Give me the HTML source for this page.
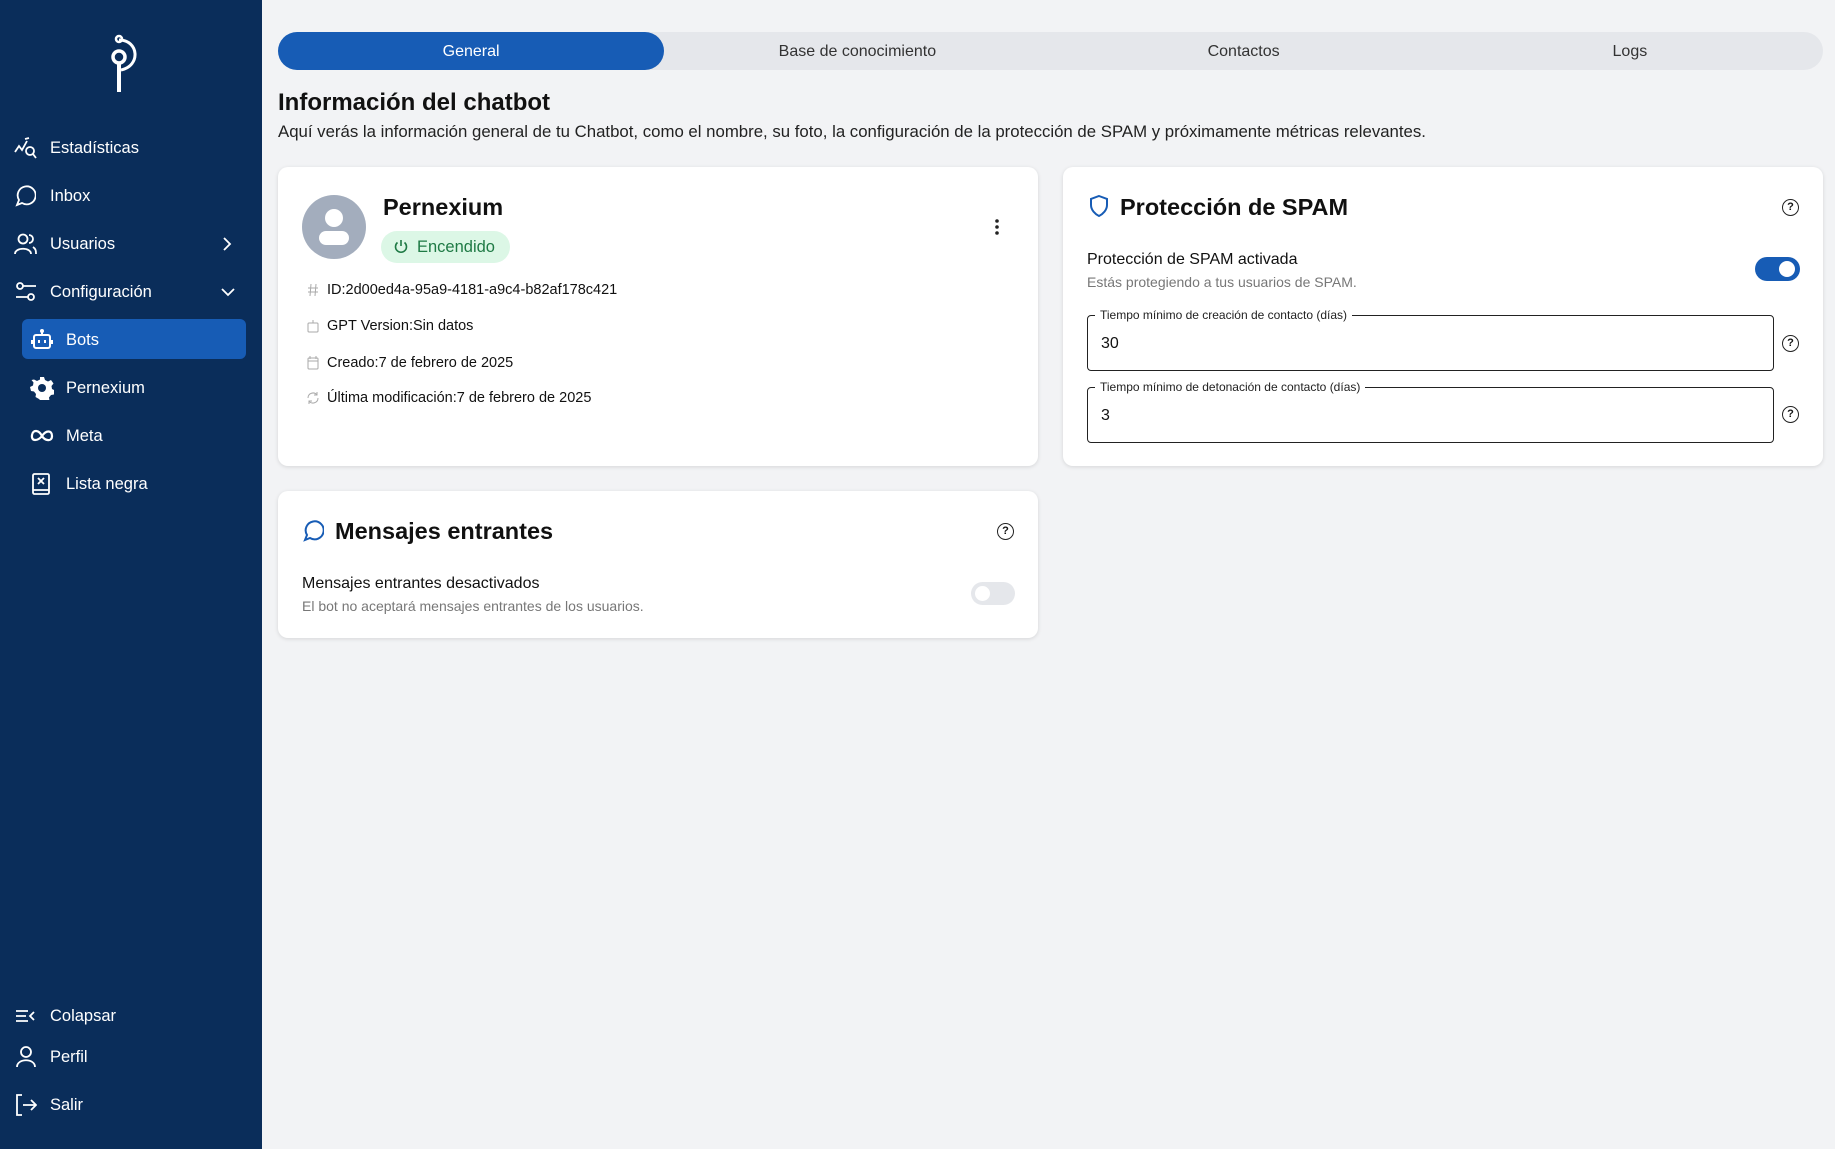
<!DOCTYPE html>
<html><head><meta charset="utf-8"><style>
*{box-sizing:border-box;margin:0;padding:0}
body{width:1835px;height:1149px;background:#f2f3f5;font-family:"Liberation Sans",sans-serif;position:relative;overflow:hidden;color:#111}
.a{position:absolute}
#sb{left:0;top:0;width:262px;height:1149px;background:#0a2d5a}
.it{position:absolute;left:0;width:262px;color:#fff;font-size:16.5px;display:flex;align-items:center;height:30px;margin-top:-14px}
.it svg{position:absolute}
.it span{position:absolute;left:50px}
.sub span{left:66px}
.tabs{left:278px;top:32px;width:1545px;height:38px;background:#e5e7eb;border-radius:19px;display:flex}
.tabs div{flex:1;text-align:center;line-height:40px;font-size:16px;color:#333}
.tabs .on{background:#175cb5;color:#fff;border-radius:19px}
.card{background:#fff;border-radius:10px;box-shadow:0 1px 4px rgba(0,0,0,.12)}
.row{position:absolute;left:307px;font-size:14.5px;display:flex;align-items:center;height:20px;margin-top:-9px}
.row svg{margin-right:8px}
.row b{font-weight:normal}
.h{font-weight:bold;font-size:23.5px}
.q{width:17px;height:17px;border:1.6px solid #222;border-radius:50%;font-size:11px;font-weight:bold;text-align:center;line-height:14px;margin-top:-8px;margin-left:-8px}
.fs{border:1.5px solid #222;border-radius:4px;background:#fff}
.lg{font-size:12px;background:#fff;padding:0 5px;color:#222}
</style></head><body>
<div id="sb" class="a">
 <svg class="a" style="left:105px;top:32px" width="40" height="62" viewBox="0 0 40 62"><circle cx="14" cy="7" r="3" fill="none" stroke="#fff" stroke-width="2.5"/><path d="M14 8 C34 8 36 34 16 38" fill="none" stroke="#fff" stroke-width="3"/><circle cx="14" cy="25" r="6" fill="none" stroke="#fff" stroke-width="3.5"/><path d="M14 31 V60" stroke="#fff" stroke-width="4"/></svg>
 <div class="it" style="top:147px"><svg style="left:14px" width="24" height="22" viewBox="0 0 24 22" fill="none" stroke="#fff" stroke-width="1.8"><path d="M1 15 L5 9 L8 13 L13 4 M11 2 L15 1"/><circle cx="16" cy="14" r="4"/><path d="M19 17 L22 21"/></svg><span>Estadísticas</span></div>
 <div class="it" style="top:195px"><svg style="left:14px" width="22" height="22" viewBox="0 0 22 22" fill="none" stroke="#fff" stroke-width="1.8"><path d="M3 20 L5 15 A9 9 0 1 1 8 18 Z"/></svg><span>Inbox</span></div>
 <div class="it" style="top:243px"><svg style="left:14px" width="24" height="22" viewBox="0 0 24 22" fill="none" stroke="#fff" stroke-width="1.8"><circle cx="9" cy="6" r="4.5"/><path d="M1 21 C1 14 17 14 17 21 M15 2 A4 4 0 0 1 15 10 M19 14 C22 16 22 18 22 21"/></svg><span>Usuarios</span><svg style="left:222px" width="10" height="14" viewBox="0 0 10 14" fill="none" stroke="#fff" stroke-width="1.8"><path d="M2 1 L8 7 L2 13"/></svg></div>
 <div class="it" style="top:291px"><svg style="left:15px" width="22" height="20" viewBox="0 0 22 20" fill="none" stroke="#fff" stroke-width="1.8"><circle cx="5" cy="4" r="3"/><path d="M8 4 H21 M1 15 H13"/><circle cx="16" cy="15" r="3"/></svg><span>Configuración</span><svg style="left:221px" width="14" height="10" viewBox="0 0 14 10" fill="none" stroke="#fff" stroke-width="1.8"><path d="M1 2 L7 8 L13 2"/></svg></div>
 <div class="a" style="left:22px;top:319px;width:224px;height:40px;background:#175cb5;border-radius:6px"></div>
 <div class="it sub" style="top:339px"><svg style="left:31px" width="22" height="22" viewBox="0 0 22 22" fill="none" stroke="#fff" stroke-width="2"><path d="M11 2 V6"/><circle cx="11" cy="2" r="1"/><rect x="3" y="6" width="16" height="13" rx="2"/><path d="M8 11 V14 M14 11 V14 M1 11 V15 M21 11 V15"/></svg><span>Bots</span></div>
 <div class="it sub" style="top:387px"><svg style="left:30px" width="24" height="24" viewBox="0 0 24 24"><path fill="#fff" d="M10 1h4l1 3 3 1.5 3-1.5 2.5 3.5-2 2.5.5 3 3 1.5-1 4-3 .5-2 2.5.5 3-3.5 2-2.5-2h-3L9 23l-3.5-2 .5-3-2-2.5-3-.5-1-4 3-1.5.5-3-2-2.5L4 3.5 7 5l3-1.5z"/><circle cx="12" cy="12" r="4" fill="#0a2d5a"/></svg><span>Pernexium</span></div>
 <div class="it sub" style="top:435px"><svg style="left:30px" width="24" height="14" viewBox="0 0 24 14" fill="none" stroke="#fff" stroke-width="2.2"><path d="M12 7 C9 1 3 0 2 6 C1 13 8 12 12 7 C16 1 22 1 22 7 C22 13 15 12 12 7"/></svg><span>Meta</span></div>
 <div class="it sub" style="top:483px"><svg style="left:32px" width="18" height="22" viewBox="0 0 18 22" fill="none" stroke="#fff" stroke-width="1.8"><rect x="1" y="1" width="16" height="20" rx="1.5"/><path d="M6 5 L12 11 M12 5 L6 11 M1 17 H17"/></svg><span>Lista negra</span></div>
 <div class="it" style="top:1015px"><svg style="left:16px" width="20" height="14" viewBox="0 0 20 14" fill="none" stroke="#fff" stroke-width="1.8"><path d="M0 2H12M0 7H10M0 12H12M18 3L14 7L18 11"/></svg><span>Colapsar</span></div>
 <div class="it" style="top:1056px"><svg style="left:16px" width="20" height="22" viewBox="0 0 20 22" fill="none" stroke="#fff" stroke-width="1.8"><circle cx="10" cy="6" r="5"/><path d="M1 21 C1 12 19 12 19 21"/></svg><span>Perfil</span></div>
 <div class="it" style="top:1104px"><svg style="left:15px" width="22" height="22" viewBox="0 0 22 22" fill="none" stroke="#fff" stroke-width="1.8"><path d="M7 1H2V21H7M8 11H21M16 6L21 11L16 16"/></svg><span>Salir</span></div>
</div>

<div class="a tabs"><div class="on">General</div><div>Base de conocimiento</div><div>Contactos</div><div>Logs</div></div>
<div class="a h" style="left:278px;top:89px;font-size:24px">Información del chatbot</div>
<div class="a" style="left:278px;top:122px;font-size:16.8px;color:#222">Aquí verás la información general de tu Chatbot, como el nombre, su foto, la configuración de la protección de SPAM y próximamente métricas relevantes.</div>

<div class="a card" style="left:278px;top:167px;width:760px;height:299px"></div>
<svg class="a" style="left:302px;top:195px" width="64" height="64" viewBox="0 0 64 64"><circle cx="32" cy="32" r="32" fill="#a3adbd"/><circle cx="32" cy="23" r="9" fill="#fff"/><rect x="17" y="36" width="30" height="14" rx="7" fill="#fff"/></svg>
<div class="a h" style="left:383px;top:194px">Pernexium</div>
<div class="a" style="left:381px;top:231px;width:129px;height:32px;background:#dcf7e6;border-radius:16px;color:#1f7a45;font-size:16.5px;line-height:33px;padding-left:36px">Encendido</div>
<svg class="a" style="left:393px;top:239px" width="16" height="16" viewBox="0 0 16 16" fill="none" stroke="#1f7a45" stroke-width="1.6"><path d="M8 1V7M4.5 3.5A5.5 5.5 0 1 0 11.5 3.5"/></svg>
<svg class="a" style="left:994px;top:218px" width="6" height="18"><circle cx="3" cy="3" r="1.8" fill="#222"/><circle cx="3" cy="9" r="1.8" fill="#222"/><circle cx="3" cy="15" r="1.8" fill="#222"/></svg>
<div class="row" style="top:289px"><svg width="12" height="14" viewBox="0 0 12 14" stroke="#aaa" fill="none"><path d="M4 1L3 13M9 1L8 13M1 5H11M1 9H11"/></svg>ID:<b>2d00ed4a-95a9-4181-a9c4-b82af178c421</b></div>
<div class="row" style="top:325px"><svg width="12" height="14" viewBox="0 0 12 14" stroke="#aaa" fill="none"><path d="M6 1V4"/><rect x="1" y="4" width="10" height="9" rx="1"/></svg>GPT Version:<b>Sin datos</b></div>
<div class="row" style="top:362px"><svg width="12" height="14" viewBox="0 0 12 14" stroke="#aaa" fill="none"><rect x="1" y="2" width="10" height="11" rx="1"/><path d="M1 5H11M3 0V3M9 0V3"/></svg>Creado:<b>7 de febrero de 2025</b></div>
<div class="row" style="top:397px"><svg width="12" height="14" viewBox="0 0 12 14" stroke="#aaa" fill="none"><path d="M1 7A5 5 0 0 1 10 4M11 7A5 5 0 0 1 2 10M10 1V4H7M2 13V10H5"/></svg>Última modificación:<b>7 de febrero de 2025</b></div>

<div class="a card" style="left:1063px;top:167px;width:760px;height:299px"></div>
<svg class="a" style="left:1090px;top:195px" width="18" height="22" viewBox="0 0 18 22" fill="none" stroke="#175cb5" stroke-width="2"><path d="M9 1L17 4V10C17 15 13 19 9 21C5 19 1 15 1 10V4Z"/></svg>
<div class="a h" style="left:1120px;top:194px">Protección de SPAM</div>
<div class="a q" style="left:1790px;top:207px">?</div>
<div class="a" style="left:1087px;top:251px;font-size:16px">Protección de SPAM activada</div>
<div class="a" style="left:1087px;top:274px;font-size:14px;color:#777">Estás protegiendo a tus usuarios de SPAM.</div>
<div class="a" style="left:1755px;top:257px;width:45px;height:24px;background:#175cb5;border-radius:12px"><div class="a" style="left:24px;top:4px;width:16px;height:16px;border-radius:50%;background:#fff"></div></div>
<div class="a fs" style="left:1087px;top:315px;width:687px;height:56px"></div>
<div class="a lg" style="left:1095px;top:308px">Tiempo mínimo de creación de contacto (días)</div>
<div class="a" style="left:1101px;top:335px;font-size:16px">30</div>
<div class="a q" style="left:1790px;top:343px">?</div>
<div class="a fs" style="left:1087px;top:387px;width:687px;height:56px"></div>
<div class="a lg" style="left:1095px;top:380px">Tiempo mínimo de detonación de contacto (días)</div>
<div class="a" style="left:1101px;top:407px;font-size:16px">3</div>
<div class="a q" style="left:1790px;top:414px">?</div>

<div class="a card" style="left:278px;top:491px;width:760px;height:147px"></div>
<svg class="a" style="left:302px;top:520px" width="22" height="22" viewBox="0 0 22 22" fill="none" stroke="#175cb5" stroke-width="2"><path d="M3 20 L5 15 A9 9 0 1 1 8 18 Z"/></svg>
<div class="a h" style="left:335px;top:518px">Mensajes entrantes</div>
<div class="a q" style="left:1005px;top:531px">?</div>
<div class="a" style="left:302px;top:575px;font-size:16px">Mensajes entrantes desactivados</div>
<div class="a" style="left:302px;top:598px;font-size:14px;color:#777">El bot no aceptará mensajes entrantes de los usuarios.</div>
<div class="a" style="left:971px;top:582px;width:44px;height:23px;background:#e5e7eb;border-radius:12px"><div class="a" style="left:4px;top:4px;width:15px;height:15px;border-radius:50%;background:#fff"></div></div>
</body></html>
